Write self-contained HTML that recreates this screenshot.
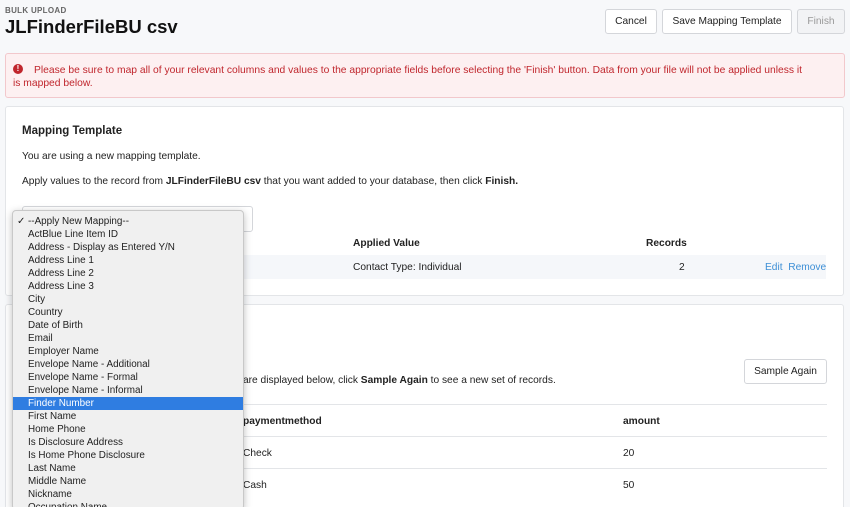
<!DOCTYPE html><html style="width:850px;height:507px;overflow:hidden"><head><style>
*{margin:0;padding:0;box-sizing:border-box}
body{width:850px;height:507px;overflow:hidden;background:#f7f8fa;font-family:"Liberation Sans",sans-serif;color:#222;position:relative;font-size:10px}
.a{position:absolute;white-space:nowrap}
.btn{position:absolute;border:1px solid #d4d6da;border-radius:3px;background:#fff;font-size:10.2px;line-height:23px;text-align:center;color:#222}
.card{position:absolute;background:#fff;border:1px solid #e3e5e8;border-radius:3px}
.dd{position:absolute;left:12px;top:210px;width:232px;height:300px;background:#f0f0f0;border:1px solid #c8c8c8;border-radius:4px;box-shadow:0 2px 8px rgba(0,0,0,.25);overflow:hidden}
.dd div{height:13px;line-height:13px;padding-left:15px;font-size:9.9px;color:#222}
.dd .s{background:#2f7de1;color:#fff}
b{font-weight:bold}
.t{font-size:10.2px}
</style></head><body>
<div class="a" style="left:5px;top:6px;font-size:8px;color:#666;font-weight:bold;letter-spacing:.3px">BULK UPLOAD</div>
<div class="a" style="left:5px;top:16px;font-size:18.5px;font-weight:bold;color:#111">JLFinderFileBU csv</div>
<div class="btn" style="left:605px;top:9px;width:52px;height:25px">Cancel</div>
<div class="btn" style="left:662px;top:9px;width:130px;height:25px">Save Mapping Template</div>
<div class="btn" style="left:797px;top:9px;width:48px;height:25px;background:#f2f3f5;color:#999">Finish</div>
<div style="position:absolute;left:5px;top:53px;width:840px;height:45px;background:#fdf0f1;border:1px solid #f2c8cc;border-radius:3px"></div>
<div style="position:absolute;left:13px;top:64px;width:10px;height:10px;border-radius:50%;background:#c0262d;color:#fff;font-size:8px;font-weight:bold;text-align:center;line-height:10px">!</div>
<div class="a" style="left:34px;top:65px;color:#c0262d;font-size:10.3px">Please be sure to map all of your relevant columns and values to the appropriate fields before selecting the 'Finish' button. Data from your file will not be applied unless it</div>
<div class="a" style="left:13px;top:78px;color:#c0262d;font-size:10.3px">is mapped below.</div>
<div class="card" style="left:5px;top:106px;width:839px;height:190px"></div>
<div class="a" style="left:22px;top:125px;font-size:11.5px;font-weight:bold">Mapping Template</div>
<div class="a t" style="left:22px;top:151px">You are using a new mapping template.</div>
<div class="a t" style="left:22px;top:176px">Apply values to the record from <b>JLFinderFileBU csv</b> that you want added to your database, then click <b>Finish.</b></div>
<div style="position:absolute;left:22px;top:206px;width:231px;height:26px;border:1px solid #d4d6da;border-radius:3px;background:#fff"></div>
<div class="a t" style="left:353px;top:238px;font-weight:bold">Applied Value</div>
<div class="a t" style="left:646px;top:238px;font-weight:bold">Records</div>
<div style="position:absolute;left:243px;top:255px;width:583px;height:24px;background:#f5f7fa"></div>
<div class="a t" style="left:353px;top:262px">Contact Type: Individual</div>
<div class="a t" style="left:679px;top:262px">2</div>
<div class="a t" style="left:765px;top:262px;color:#3d8fd6">Edit&nbsp; Remove</div>
<div class="card" style="left:5px;top:304px;width:839px;height:210px"></div>
<div class="btn" style="left:744px;top:359px;width:83px;height:25px">Sample Again</div>
<div class="a t" style="left:243px;top:375px">are displayed below, click <b>Sample Again</b> to see a new set of records.</div>
<div style="position:absolute;left:243px;top:404px;width:584px;height:1px;background:#e3e5e8"></div>
<div class="a t" style="left:243px;top:416px;font-weight:bold">paymentmethod</div>
<div class="a t" style="left:623px;top:416px;font-weight:bold">amount</div>
<div style="position:absolute;left:243px;top:436px;width:584px;height:1px;background:#e3e5e8"></div>
<div class="a t" style="left:243px;top:448px">Check</div>
<div class="a t" style="left:623px;top:448px">20</div>
<div style="position:absolute;left:243px;top:468px;width:584px;height:1px;background:#e3e5e8"></div>
<div class="a t" style="left:243px;top:480px">Cash</div>
<div class="a t" style="left:623px;top:480px">50</div>
<div class="dd" style="padding-top:4px">
<div style="padding-left:4px">✓ --Apply New Mapping--</div>
<div>ActBlue Line Item ID</div><div>Address - Display as Entered Y/N</div><div>Address Line 1</div><div>Address Line 2</div><div>Address Line 3</div><div>City</div><div>Country</div><div>Date of Birth</div><div>Email</div><div>Employer Name</div><div>Envelope Name - Additional</div><div>Envelope Name - Formal</div><div>Envelope Name - Informal</div><div class="s">Finder Number</div><div>First Name</div><div>Home Phone</div><div>Is Disclosure Address</div><div>Is Home Phone Disclosure</div><div>Last Name</div><div>Middle Name</div><div>Nickname</div><div>Occupation Name</div>
</div>
</body></html>
